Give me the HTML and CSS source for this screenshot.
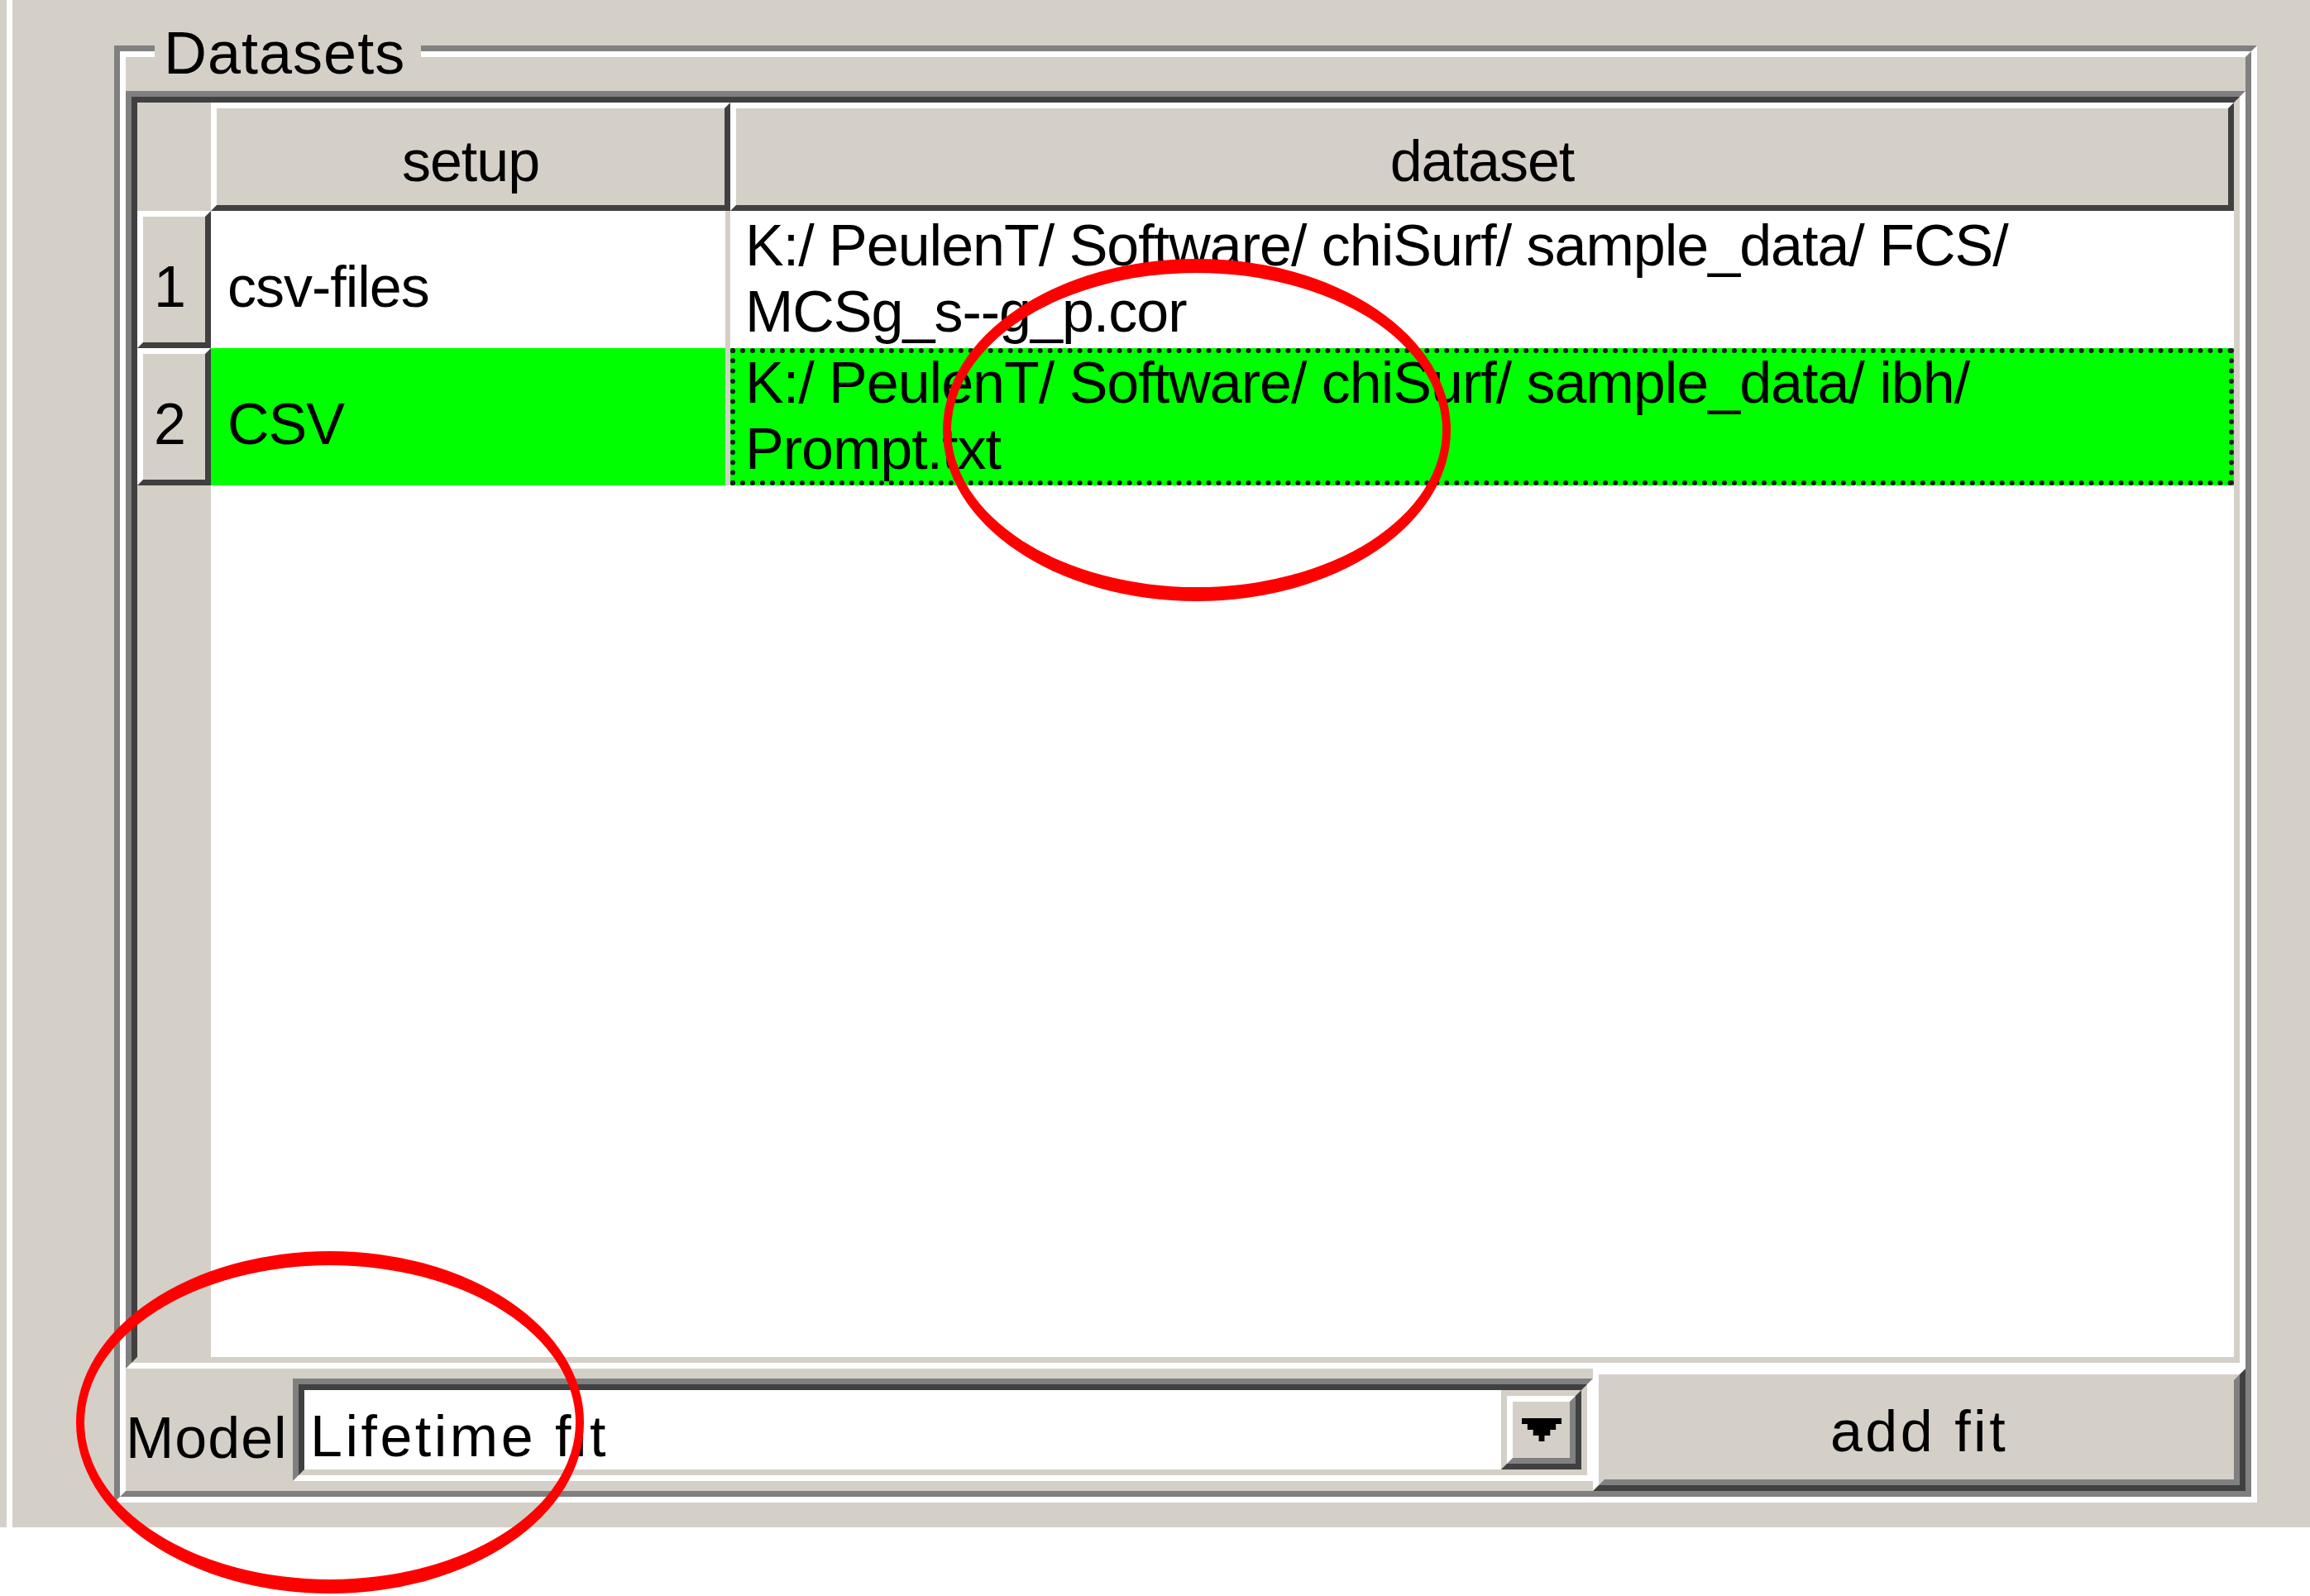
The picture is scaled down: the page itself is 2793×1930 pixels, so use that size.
FILE: index.html
```html
<!DOCTYPE html>
<html>
<head>
<meta charset="utf-8">
<title>Datasets</title>
<link rel="stylesheet" href="styles.css">
</head>
<body>
<div class="window">
  <div class="pane">
    <div class="groupbox">
      <div class="gb-title">Datasets</div>
      <div class="gb-inner">
        <div class="table">
          <div class="table-inner">
            <div class="corner"></div>
            <div class="hsec">setup</div>
            <div class="hsec">dataset</div>
            <div class="rhead">1</div>
            <div class="cell setup">csv-files</div>
            <div class="cell data">K:/ PeulenT/ Software/ chiSurf/ sample_data/ FCS/<br>MCSg_s--g_p.cor</div>
            <div class="rhead">2</div>
            <div class="cell setup sel">CSV</div>
            <div class="cell data sel focus">K:/ PeulenT/ Software/ chiSurf/ sample_data/ ibh/<br>Prompt.txt</div>
            <div class="rfill"></div>
            <div class="efill"></div>
          </div>
        </div>
        <div class="bottom">
          <div class="lbl">Model</div>
          <div class="combo">
            <div class="combo-inner">
              <span class="combo-text">Lifetime fit</span>
              <div class="drop">
                <div class="drop-inner">
                  <svg viewBox="0 0 7 4" preserveAspectRatio="none"><path d="M0 0H7V1H6V2H5V3H4V4H3V3H2V2H1V1H0Z" fill="#000"/></svg>
                </div>
              </div>
            </div>
          </div>
          <div class="btn"><div class="btn-inner">add fit</div></div>
        </div>
      </div>
    </div>
  </div>
</div>
<svg class="annot" width="2793" height="1930" viewBox="0 0 2793 1930">
  <path fill="#ff0000" fill-rule="evenodd" d="M1140 520a307 207 0 1 0 614 0a307 207 0 1 0 -614 0Z M1150 520a297 190 0 1 0 594 0a297 190 0 1 0 -594 0Z"/>
  <path fill="#ff0000" fill-rule="evenodd" d="M92 1720a307 207 0 1 0 614 0a307 207 0 1 0 -614 0Z M102 1720a297 190 0 1 0 594 0a297 190 0 1 0 -594 0Z"/>
</svg>
</body>
</html>
```

FILE: styles.css
```css
* { box-sizing: border-box; }
html, body { margin: 0; padding: 0; }
body {
  width: 2793px;
  height: 1930px;
  background: #fff;
  font-family: "Liberation Sans", Arial, sans-serif;
  font-size: 70px;
  line-height: 80px;
  letter-spacing: -1px;
  color: #000;
  position: relative;
  overflow: hidden;
}
.window {
  height: 1847px;
  background: #d4d0c8;
  padding-left: 8px;
}
.pane {
  height: 100%;
  border-left: 7px solid #fff;
  padding: 55px 0 0 123px;
}
.groupbox {
  position: relative;
  width: 2591px;
  height: 1762px;
  border: 7px solid;
  border-color: #808080 #fff #fff #808080;
}
.gb-title {
  position: absolute;
  left: 42px;
  top: -34px;
  padding: 0 19px 0 11px;
  background: #d4d0c8;
  font-size: 72px;
  line-height: 72px;
  letter-spacing: 1px;
  z-index: 1;
}
.gb-inner {
  height: 100%;
  border: 7px solid;
  border-color: #fff #808080 #808080 #fff;
  padding-top: 41px;
  display: flex;
  flex-direction: column;
}
.table {
  flex: none;
  height: 1545px;
  border: 7px solid;
  border-color: #808080 #fff #fff #808080;
}
.table-inner {
  height: 100%;
  border: 7px solid;
  border-color: #404040 #d4d0c8 #d4d0c8 #404040;
  background: #fff;
  display: grid;
  grid-template-columns: 89px 628px 1fr;
  grid-template-rows: 131px 166px 166px 1fr;
}
.corner, .rfill { background: #d4d0c8; }
.efill { grid-column: 2 / 4; }
.hsec {
  background: #d4d0c8;
  border: 7px solid;
  border-color: #fff #404040 #404040 #fff;
  text-align: center;
  padding-top: 24px;
  white-space: nowrap;
  overflow: hidden;
}
.rhead {
  background: #d4d0c8;
  border: 7px solid;
  border-color: #fff #404040 #404040 #fff;
  text-align: center;
  padding: 45px 11px 0 0;
}
.cell {
  white-space: nowrap;
  overflow: hidden;
}
.setup {
  padding: 52px 0 0 20px;
  border-right: 6px solid #d4d0c8;
}
.data {
  padding: 2px 0 0 18px;
}
.sel { background: #00ff00; }
.focus {
  outline: 6px dotted #1e1e1e;
  outline-offset: -6px;
}
.bottom {
  flex: 1;
  display: flex;
  align-items: center;
}
.lbl {
  flex: none;
  width: 202px;
  padding-top: 20px;
  white-space: nowrap;
  letter-spacing: 1px;
}
.combo {
  flex: none;
  width: 1572px;
  height: 124px;
  border: 7px solid;
  border-color: #808080 #fff #fff #808080;
}
.combo-inner {
  height: 100%;
  border: 7px solid;
  border-color: #404040 #d4d0c8 #d4d0c8 #404040;
  background: #fff;
  display: flex;
}
.combo-text {
  flex: 1;
  padding: 16px 0 0 7px;
  white-space: nowrap;
  letter-spacing: 3.5px;
}
.drop {
  flex: none;
  width: 97px;
  background: #d4d0c8;
  border: 7px solid;
  border-color: #d4d0c8 #404040 #404040 #d4d0c8;
}
.drop-inner {
  height: 100%;
  border: 7px solid;
  border-color: #fff #808080 #808080 #fff;
  display: flex;
  align-items: center;
  justify-content: center;
}
.drop-inner svg {
  display: block;
  width: 48px;
  height: 28px;
}
.btn {
  flex: 1;
  align-self: stretch;
  background: #d4d0c8;
  border: 7px solid;
  border-color: #fff #404040 #404040 #fff;
}
.btn-inner {
  height: 100%;
  border: 7px solid;
  border-color: #d4d0c8 #808080 #808080 #d4d0c8;
  text-align: center;
  padding-top: 22px;
  white-space: nowrap;
  letter-spacing: 3.5px;
}
.annot {
  position: absolute;
  left: 0;
  top: 0;
  pointer-events: none;
}
```
